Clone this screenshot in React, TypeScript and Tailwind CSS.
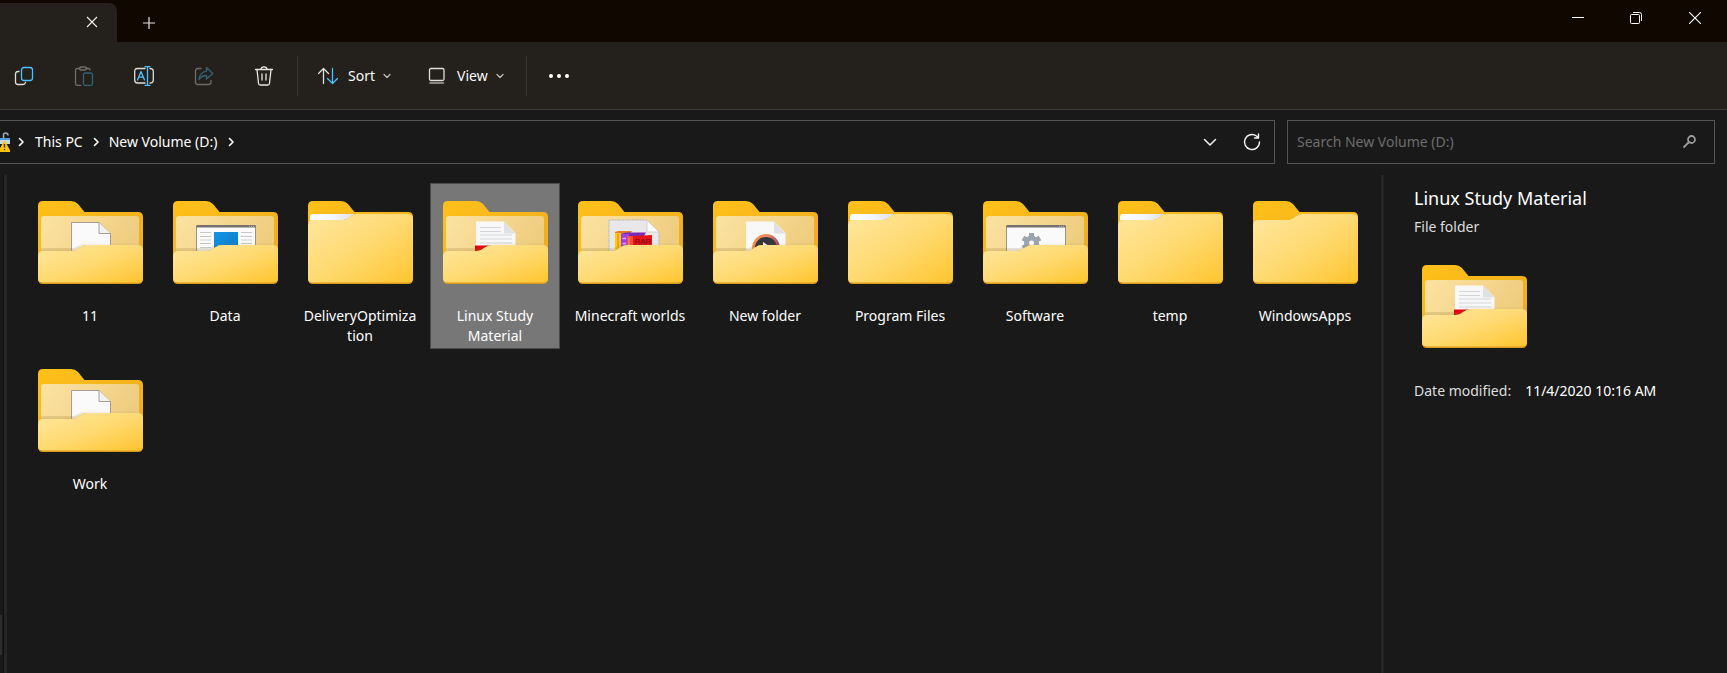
import type { ReactNode } from "react";

type Content = "empty" | "papers" | "file" | "window" | "pdf" | "rar" | "media" | "settings";

const folders: { name: string; content: Content; selected?: boolean }[] = [
    { name: "11", content: "file" },
    { name: "Data", content: "window" },
    { name: "DeliveryOptimization", content: "papers" },
    { name: "Linux Study Material", content: "pdf", selected: true },
    { name: "Minecraft worlds", content: "rar" },
    { name: "New folder", content: "media" },
    { name: "Program Files", content: "papers" },
    { name: "Software", content: "settings" },
    { name: "temp", content: "papers" },
    { name: "WindowsApps", content: "empty" },
    { name: "Work", content: "file" },
];

// Gradients shared by every folder icon
function FolderDefs() {
    return (
        <svg className="absolute w-0 h-0" aria-hidden="true">
            <defs>
                <linearGradient id="folder-back" x1="0" y1="0" x2="1" y2="1">
                    <stop offset="0" stopColor="#ffc118" />
                    <stop offset="1" stopColor="#e9a722" />
                </linearGradient>
                <linearGradient id="folder-inner" x1="0" y1="0" x2="1" y2="0.3">
                    <stop offset="0" stopColor="#fce3a2" />
                    <stop offset="1" stopColor="#efcd80" />
                </linearGradient>
                <linearGradient id="folder-front" x1="0" y1="0" x2="1" y2="1">
                    <stop offset="0" stopColor="#ffe79f" />
                    <stop offset="0.5" stopColor="#ffda72" />
                    <stop offset="1" stopColor="#ffc52e" />
                </linearGradient>
                <linearGradient id="folder-paper" x1="0" y1="0" x2="1" y2="0">
                    <stop offset="0" stopColor="#ffffff" />
                    <stop offset="0.5" stopColor="#f4f5f8" />
                    <stop offset="1" stopColor="#d9dce4" />
                </linearGradient>
                <linearGradient id="folder-shade" x1="0" y1="0" x2="0" y2="1">
                    <stop offset="0" stopColor="#8a6a20" stopOpacity="0" />
                    <stop offset="1" stopColor="#8a6a20" stopOpacity="0.25" />
                </linearGradient>
                <linearGradient id="media-ring" x1="0" y1="0" x2="1" y2="0">
                    <stop offset="0" stopColor="#f58a4b" />
                    <stop offset="0.6" stopColor="#e98a5c" />
                    <stop offset="1" stopColor="#a3486f" />
                </linearGradient>
                <linearGradient id="window-blue" x1="0" y1="0" x2="1" y2="1">
                    <stop offset="0" stopColor="#1494e4" />
                    <stop offset="1" stopColor="#0a77c8" />
                </linearGradient>
            </defs>
        </svg>
    );
}

function FolderContent({ content }: { content: Content }) {
    switch (content) {
        case "file":
            return (
                <g stroke="#8f8b86" strokeWidth="0.8">
                    <path d="M33.5 56V21.5H61L72.5 33V56Z" fill="#fafafa" />
                    <path d="M61 21.5V32.5H72.5" fill="#f1f1f1" />
                </g>
            );
        case "window":
            return (
                <g>
                    <rect x="23.5" y="24.5" width="59" height="32" rx="1" fill="#fafafa" stroke="#8b8985" strokeWidth="0.9" />
                    <path d="M23 26.5V25.5Q23 24 24.5 24H81.5Q83 24 83 25.5V26.5Z" fill="#75736f" />
                    <path d="M76 25.3H81" stroke="#bbb" strokeDasharray="1 1" />
                    <path d="M27 31.5H38M27 35.5H38M27 42.5H38M27 46.5H38M68 31.5H79M68 35.5H79M68 42.5H79M68 46.5H79" stroke="#c6c6c6" />
                    <path d="M27 39H38M68 39H79" stroke="#e0e0e0" strokeWidth="1.5" />
                    <rect x="41" y="31" width="24" height="20" fill="url(#window-blue)" />
                </g>
            );
        case "pdf":
            return (
                <g>
                    <path d="M33 46V20.5H61L72.5 32V46Z" fill="#f8f8f9" />
                    <path d="M61 20.5V32.5H72.5Z" fill="#dfe0e3" />
                    <path d="M37 26.5H58M37 30.5H58M37 34H69M37 38H69M37 42H69" stroke="#d3d5d9" />
                    <rect x="32" y="44.5" width="42" height="8" fill="#e60012" />
                </g>
            );
        case "rar":
            return (
                <g>
                    <path d="M31 56V19H69L81 31V56Z" fill="#e8e8ea" stroke="#bcbcbc" strokeDasharray="2 0.5" />
                    <path d="M69 19V31H81Z" fill="#fbfbfb" stroke="#c4c4c4" strokeWidth="0.7" />
                    <path d="M37 31L40 30H54L52 33H37Z" fill="#e27a2a" />
                    <path d="M43 33L48 31.5H68L66 35H43Z" fill="#7a2bb5" />
                    <rect x="37" y="32" width="6" height="20" fill="#ffc91c" />
                    <path d="M40 33V50" stroke="#f08a00" strokeWidth="1.2" />
                    <rect x="43" y="33" width="8" height="19" fill="#9b3fe6" />
                    <path d="M44.5 37.5H48M44.5 42.5H48" stroke="#e9a8ff" strokeWidth="1.3" />
                    <rect x="49" y="35" width="7" height="17" fill="#ff4a32" />
                    <path d="M51 37V50" stroke="#ff9166" strokeWidth="1.2" />
                    <path d="M55 35L74 34V52H55Z" fill="#e5141b" />
                    <text x="56.5" y="43" fontSize="8" fill="#7c0a0c" fontFamily="Liberation Sans, sans-serif">
                        RAR
                    </text>
                </g>
            );
        case "media":
            return (
                <g>
                    <path d="M33 56V20.5H61L72.5 32V56Z" fill="#f8f8f9" />
                    <path d="M61 20.5V32.5H72.5Z" fill="#dfe0e3" />
                    <circle cx="53" cy="47" r="12.5" fill="#35363c" stroke="url(#media-ring)" strokeWidth="2.8" />
                    <path d="M50 41L59 47L50 53Z" fill="#f5f5f5" />
                </g>
            );
        case "settings":
            return (
                <g>
                    <rect x="23.5" y="24.5" width="59" height="32" rx="1" fill="#fafafa" stroke="#8b8985" strokeWidth="0.9" />
                    <path d="M23 26.5V25.5Q23 24 24.5 24H81.5Q83 24 83 25.5V26.5Z" fill="#75736f" />
                    <path d="M76 25.3H81" stroke="#bbb" strokeDasharray="1 1" />
                    <circle cx="48.5" cy="42" r="5" fill="none" stroke="#9ba4ae" strokeWidth="5" />
                    <path
                        d="M48.5 32V36M40 37L43.5 39M57 37L53.5 39M40 47L43.5 45M57 47L53.5 45"
                        stroke="#9ba4ae"
                        strokeWidth="5"
                    />
                </g>
            );
        default:
            return null;
    }
}

function FolderIcon({ content }: { content: Content }) {
    const open = content !== "empty" && content !== "papers";
    return (
        <svg className="w-[105px] h-[83px] shrink-0" viewBox="0 0 105 83" fill="none" aria-hidden="true">
            <path
                d="M0 5Q0 0 5 0H33Q37 0 40 3L46.5 11H100Q105 11 105 16V77Q105 82 100 82H5Q0 82 0 77Z"
                fill="url(#folder-back)"
            />
            {open ? (
                <>
                    <path d="M3 18Q3 15 6 15H98Q101 15 101 18V56H3Z" fill="url(#folder-inner)" />
                    <FolderContent content={content} />
                    <path d="M3 47H36L46 41H101V50H3Z" fill="url(#folder-shade)" />
                    <path
                        d="M0 55Q0 50 5 50H33Q38 50 41 47L43 46Q45 44 49 44H100Q105 44 105 49V78Q105 83 100 83H5Q0 83 0 78Z"
                        fill="#d99b1c"
                    />
                    <path
                        d="M0 55Q0 50 5 50H33Q38 50 41 47L43 46Q45 44 49 44H100Q105 44 105 49V77Q105 81.5 100 81.5H5Q0 81.5 0 77Z"
                        fill="url(#folder-front)"
                    />
                </>
            ) : (
                <>
                    {content === "papers" && <path d="M2 20V16Q2 13 5 13H50V20Z" fill="url(#folder-paper)" />}
                    <path
                        d="M0 24Q0 19 5 19H35Q39 19 42 16L43 15Q46 13 49 13H100Q105 13 105 18V78Q105 83 100 83H5Q0 83 0 78Z"
                        fill="#d99b1c"
                    />
                    <path
                        d="M0 24Q0 19 5 19H35Q39 19 42 16L43 15Q46 13 49 13H100Q105 13 105 18V77Q105 81.5 100 81.5H5Q0 81.5 0 77Z"
                        fill="url(#folder-front)"
                    />
                </>
            )}
        </svg>
    );
}

function Icon({ children }: { children: ReactNode }) {
    return (
        <svg className="w-5 h-5 shrink-0" viewBox="0 0 20 20" fill="none" strokeWidth="1.3" strokeLinecap="round" strokeLinejoin="round" aria-hidden="true">
            {children}
        </svg>
    );
}

function ChevronDown() {
    return (
        <svg className="w-2 h-2" viewBox="0 0 8 8" fill="none" stroke="#c4c2bf" strokeWidth="1.2" strokeLinecap="round" strokeLinejoin="round" aria-hidden="true">
            <path d="M1 2.5L4 5.5L7 2.5" />
        </svg>
    );
}

function ChevronRight({ className }: { className: string }) {
    return (
        <svg className={className} viewBox="0 0 12 12" fill="none" stroke="currentColor" strokeWidth="1.6" strokeLinecap="round" strokeLinejoin="round" aria-hidden="true">
            <path d="M4.5 2.5L8 6L4.5 9.5" />
        </svg>
    );
}

function ToolButton({ label, disabled, children }: { label: string; disabled?: boolean; children: ReactNode }) {
    return (
        <button aria-label={label} disabled={disabled} className="w-12 h-10 flex items-center justify-center disabled:opacity-40">
            <Icon>{children}</Icon>
        </button>
    );
}

function TitleBar() {
    return (
        <header className="h-[42px] flex items-end justify-between bg-[#100800]">
            <div className="flex items-end">
                <div className="w-[117px] h-[39px] flex items-center justify-end pr-[15px] pb-[2px] bg-[#24201c] rounded-tr-lg">
                    <button aria-label="Close tab" className="w-5 h-5 flex items-center justify-center">
                        <svg className="w-3 h-3" viewBox="0 0 12 12" stroke="#f0f0f0" strokeWidth="1.1">
                            <path d="M1 1L11 11M11 1L1 11" />
                        </svg>
                    </button>
                </div>
                <button aria-label="New tab" className="w-16 h-[38px] flex items-center justify-center">
                    <svg className="w-3 h-3" viewBox="0 0 12 12" stroke="#e4e2e0" strokeWidth="1.2">
                        <path d="M6 0V12M0 6H12" />
                    </svg>
                </button>
            </div>
            <div className="flex self-start">
                <button aria-label="Minimize" className="w-[58px] h-9 flex items-center justify-center">
                    <svg className="w-3 h-3" viewBox="0 0 12 12" stroke="#fff">
                        <path d="M0 5.5H12" />
                    </svg>
                </button>
                <button aria-label="Restore" className="w-[58px] h-9 flex items-center justify-center">
                    <svg className="w-3 h-3" viewBox="0 0 12 12" fill="none" stroke="#fff">
                        <rect x="0.5" y="2.5" width="9" height="9" rx="1" />
                        <path d="M3 0.5H9.5Q11.5 0.5 11.5 2.5V9" />
                    </svg>
                </button>
                <button aria-label="Close" className="w-[62px] h-9 pr-[2px] flex items-center justify-center">
                    <svg className="w-3 h-3" viewBox="0 0 12 12" stroke="#fff" strokeWidth="1.1">
                        <path d="M0 0L12 12M12 0L0 12" />
                    </svg>
                </button>
            </div>
        </header>
    );
}

function Toolbar() {
    return (
        <div className="h-[68px] flex items-center bg-[#24201c] border-b border-[#3c3a37] text-[#fafafa]">
            <div className="flex gap-3">
                <ToolButton label="Copy">
                    <path d="M5 5.5H4Q1.5 5.5 1.5 8V16Q1.5 18.5 4 18.5H9Q11 18.5 11.5 16.5" stroke="#e0deda" />
                    <rect x="7.5" y="1.5" width="11" height="13" rx="2.5" stroke="#4cc2ff" />
                </ToolButton>
                <ToolButton label="Paste" disabled>
                    <path d="M6 2.5H3.5Q1.5 2.5 1.5 4.5V17.5Q1.5 19.3 3.5 19.3H7M12 2.5H14.5Q16 2.5 16 4" stroke="#e0deda" />
                    <rect x="5.5" y="1" width="7" height="3" rx="1.5" stroke="#e0deda" />
                    <rect x="9.5" y="7" width="9" height="12.3" rx="1.5" stroke="#4cc2ff" />
                </ToolButton>
                <ToolButton label="Rename">
                    <path d="M11 2.5H3.5Q0.7 2.5 0.7 5.5V14Q0.7 17 3.5 17H11M16 2.5Q19.3 2.5 19.3 5.5V14Q19.3 17 16 17" stroke="#e0deda" />
                    <path d="M3.5 14L7 5.5L10.5 14M4.8 11.2H9.2M13.5 0.7V19.3M11 0.7H16M11 19.3H16" stroke="#4cc2ff" />
                </ToolButton>
                <ToolButton label="Share" disabled>
                    <path d="M7 2.5H4Q1.5 2.5 1.5 5V16Q1.5 18.5 4 18.5H14.5Q17 18.5 17 16V14.5" stroke="#e0deda" />
                    <path d="M12.5 1.5L18.8 7.5L12.5 13V9.5Q8 9.5 5 13.5Q6 6 12.5 5.2Z" stroke="#4cc2ff" />
                </ToolButton>
                <ToolButton label="Delete">
                    <path d="M1.5 3.5H18.5M7 3.5Q7 0.8 10 0.8Q13 0.8 13 3.5M3 3.5L4.5 17.5Q4.7 19 6.2 19H13.8Q15.3 19 15.5 17.5L17 3.5M8 8V14M12 8V14" stroke="#e8e6e3" />
                </ToolButton>
            </div>
            <div className="w-px h-10 ml-[9px] bg-[#3a3733]" />
            <button className="h-10 ml-5 flex items-center">
                <Icon>
                    <path d="M5.5 17.5V2.5M0.5 7.5L5.5 2.5L10.5 7.5" stroke="#e0deda" />
                    <path d="M14.5 2.5V17.5M9.5 12.5L14.5 17.5L19.5 12.5" stroke="#4cc2ff" />
                </Icon>
                <span className="ml-[10px] mr-2">Sort</span>
                <ChevronDown />
            </button>
            <button className="h-10 ml-9 flex items-center">
                <Icon>
                    <rect x="2.5" y="2.5" width="14.5" height="12" rx="1.5" stroke="#e0deda" />
                    <path d="M3 17H16.5" stroke="#a9a6a2" strokeWidth="1.6" />
                </Icon>
                <span className="ml-[10px] mr-2">View</span>
                <ChevronDown />
            </button>
            <div className="w-px h-10 ml-[22px] bg-[#3a3733]" />
            <button aria-label="See more" className="w-16 h-10 flex items-center justify-center gap-1">
                <span className="w-1 h-1 rounded-full bg-white" />
                <span className="w-1 h-1 rounded-full bg-white" />
                <span className="w-1 h-1 rounded-full bg-white" />
            </button>
        </div>
    );
}

function AddressRow() {
    return (
        <div className="flex gap-3 pt-[10px] pr-3">
            <nav className="flex-1 h-11 flex items-center border border-l-0 border-[#545454] text-white">
                <svg className="w-[10px] h-5 shrink-0" viewBox="0 0 10 20" fill="none" aria-hidden="true">
                    <path d="M3.5 6V3Q3.5 1 5.5 1Q8 1 8 3.5" stroke="#9aa9bb" strokeWidth="1.5" />
                    <rect y="6" width="10" height="6" fill="#c9d6e4" />
                    <rect y="6" width="10" height="2" fill="#4f9be0" />
                    <path d="M4.5 8L11 20H-2Z" fill="#ffc40c" />
                    <path d="M4.5 12V15.5M4.5 17V18.3" stroke="#3a2d00" strokeWidth="1.3" />
                </svg>
                <ChevronRight className="w-3 h-3 ml-[5px]" />
                <button className="ml-2">This PC</button>
                <ChevronRight className="w-3 h-3 mx-[7px]" />
                <button>New Volume (D:)</button>
                <ChevronRight className="w-3 h-3 ml-2" />
                <button aria-label="Previous locations" className="ml-auto w-10 h-10 flex items-center justify-center">
                    <svg className="w-4 h-4" viewBox="0 0 16 16" fill="none" stroke="#f4f4f4" strokeWidth="1.5" strokeLinecap="round" strokeLinejoin="round">
                        <path d="M2.5 5.5L8 11L13.5 5.5" />
                    </svg>
                </button>
                <button aria-label="Refresh" className="w-11 h-10 flex items-center justify-center">
                    <svg className="w-5 h-5" viewBox="0 0 20 20" fill="none" stroke="#f4f4f4" strokeWidth="1.4" strokeLinecap="round" strokeLinejoin="round">
                        <path d="M17.5 10A7.5 7.5 0 1 1 14.5 4L16.5 6M16.5 2V6H12.5" />
                    </svg>
                </button>
            </nav>
            <label className="w-[428px] h-11 flex items-center pl-[9px] pr-4 border border-[#545454]">
                <input
                    type="text"
                    aria-label="Search New Volume (D:)"
                    placeholder="Search New Volume (D:)"
                    className="flex-1 min-w-0 bg-transparent outline-none text-white placeholder:text-[#6d6d6d]"
                />
                <svg className="w-4 h-4" viewBox="0 0 16 16" fill="none" stroke="#9b9b9b" strokeWidth="1.8" strokeLinecap="round" aria-hidden="true">
                    <circle cx="9.5" cy="5.5" r="3.5" />
                    <path d="M6.5 8.5L2 13" />
                </svg>
            </label>
        </div>
    );
}

export default function App() {
    return (
        <div className="min-h-screen flex flex-col bg-[#191919] font-['Noto_Sans','Open_Sans',sans-serif] text-[14px] leading-5 text-white">
            <FolderDefs />
            <TitleBar />
            <Toolbar />
            <AddressRow />
            <div className="flex-1 flex mt-[11px]">
                <div className="w-[3px] flex flex-col justify-end pb-[18px]">
                    <div className="w-[2px] h-10 bg-[#2d2d2d]" />
                </div>
                <div className="w-1 bg-[#262626] border-l border-[#101010]" />
                <main className="flex-1 pl-[18px] pt-2">
                    <ul className="grid grid-cols-[repeat(auto-fill,130px)] gap-x-[5px] gap-y-[2px]">
                        {folders.map((folder) => (
                            <li key={folder.name}>
                                <button
                                    aria-pressed={!!folder.selected}
                                    className={
                                        "w-full h-[166px] px-[6px] pt-[17px] flex flex-col items-center border " +
                                        (folder.selected ? "bg-[#777777] border-[#4a4a4a]" : "border-transparent")
                                    }
                                >
                                    <FolderIcon content={folder.content} />
                                    <span className="w-full mt-[22px] text-center break-words">{folder.name}</span>
                                </button>
                            </li>
                        ))}
                    </ul>
                </main>
                <div className="w-[3px] bg-[#2b2b2b] border-x border-[#222222]" />
                <aside className="w-[343px] pl-[30px] pt-[11px]">
                    <h1 className="text-[18px] leading-6">Linux Study Material</h1>
                    <p className="mt-[7px] text-[#dedede]">File folder</p>
                    <div className="mt-7 ml-2">
                        <FolderIcon content="pdf" />
                    </div>
                    <dl className="mt-[33px] flex gap-[14px]">
                        <dt className="text-[#dedede]">Date modified:</dt>
                        <dd>11/4/2020 10:16 AM</dd>
                    </dl>
                </aside>
            </div>
        </div>
    );
}
